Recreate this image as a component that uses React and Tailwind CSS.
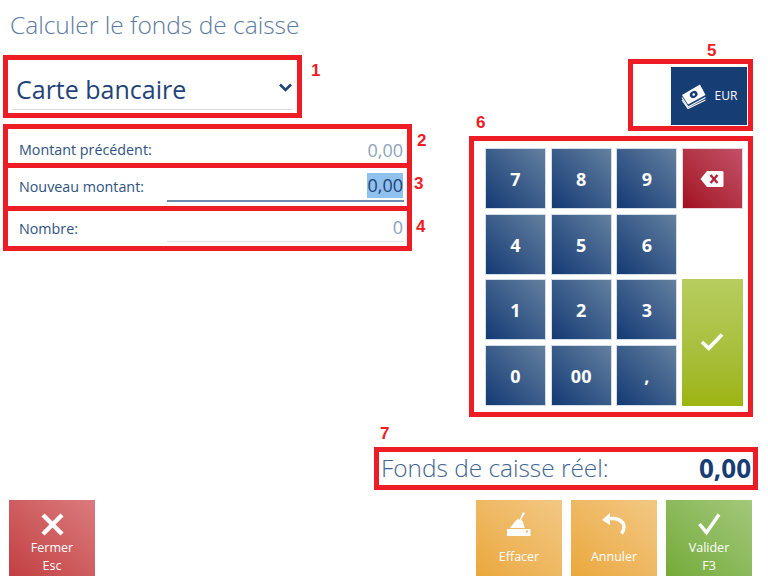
import React from 'react';

const FONT = { fontFamily: '"Open Sans", "Noto Sans", sans-serif' };

const keyClass =
  'flex items-center justify-center h-[61px] pt-[2px] bg-linear-to-tr from-[#133a74] to-[#64809f] text-white font-bold text-[18px] border border-[#d5dde8]';

const Tag = ({ children, className }) => (
  <span
    className={`absolute text-[17px] font-bold leading-none text-[#ee1c25] ${className}`}
    style={{ fontFamily: '"Liberation Sans", sans-serif' }}
  >
    {children}
  </span>
);

const BackspaceIcon = () => (
  <svg width="24" height="18" viewBox="0 0 24 18">
    <path d="M7 1h15a1.500 1.500 0 0 1 1.500 1.500v13A1.500 1.500 0 0 1 22 17H7L0.500 9z" fill="#fff" />
    <path d="M10.500 5l7 8M17.500 5l-7 8" stroke="#b3223c" strokeWidth="2.400" fill="none" />
  </svg>
);

const MoneyIcon = () => (
  <svg width="25" height="25" viewBox="0 0 25 25" fill="none">
    <path d="M1 13.500l6 9.500L24.500 13.500" stroke="#fff" strokeWidth="1.200" />
    <path d="M1 16l6 8.500L24.500 16" stroke="#fff" strokeWidth="1.200" />
    <path d="M1 11l6 9.500L24.500 11 19 .5z" fill="#fff" />
    <ellipse cx="12.700" cy="10.500" rx="4" ry="3.300" fill="#173d75" transform="rotate(-28 12.700 10.500)" />
    <circle cx="12.700" cy="10.500" r="1.300" fill="#fff" />
  </svg>
);

const BroomIcon = () => (
  <svg width="24" height="24" viewBox="0 0 24 24" fill="#fff">
    <path d="M16 0l2 1.200-4 6.300 2 2 1.700 6.500H3l5-6.500 3-2.500 1.500 .8z" />
    <path fillRule="evenodd" d="M0 17h23.500v7H0zM19 18.500v2h2v-2z" />
  </svg>
);

const UndoIcon = () => (
  <svg width="24" height="24" viewBox="0 0 24 24" fill="none">
    <path d="M0 8L8 1v12z" fill="#fff" />
    <path d="M7 6.500h4C18 6.500 22 10.500 22 15c0 2.500-1 4.500-2.500 6.500" stroke="#fff" strokeWidth="3.500" />
  </svg>
);

const KeyCheckIcon = () => (
  <svg width="24" height="18" viewBox="0 0 22 17" fill="none" stroke="#fff" strokeWidth="3.500">
    <path d="M1.500 8.500l6.500 6L20.500 1.500" />
  </svg>
);

const TallCheckIcon = () => (
  <svg width="23" height="23" viewBox="0 0 23 23" fill="none" stroke="#fff" strokeWidth="3.500">
    <path d="M1.500 11l7 8.500L21 1.500" />
  </svg>
);

const CloseIcon = () => (
  <svg width="23" height="23" viewBox="0 0 23 23" fill="none" stroke="#fff" strokeWidth="4.500">
    <path d="M2 2l19 19M21 2L2 21" />
  </svg>
);

const ActionButton = ({ icon, lines, tone, className }) => (
  <div
    className={`flex flex-col items-center w-[86px] h-[76px] bg-linear-to-tr text-white text-[12.500px] leading-[18px] ${tone} ${className || ''}`}
  >
    <div className="flex items-center justify-center h-[44px] mt-[2px] shrink-0">{icon}</div>
    <div className={lines.length === 1 ? 'mt-[2px]' : 'mt-[-7px]'}>
      {lines.map((line) => (
        <div key={line} className="text-center">
          {line}
        </div>
      ))}
    </div>
  </div>
);

export default function App() {
  return (
    <div className="relative flex flex-col w-[768px] h-[585px] overflow-hidden bg-white" style={FONT}>
      <h1 className="h-[55px] pl-[10px] pt-[6px] text-[24.500px] leading-[38px] font-light text-[#5b7aa0]">
        Calculer le fonds de caisse
      </h1>

      <div className="flex items-start h-[392px] pl-[3px]">
        <div className="flex flex-col w-[409px]">
          <div className="relative flex items-end w-[299px] h-[63px] border-[5px] border-[#ee1c25] px-[4px] pb-[3px]">
            <div className="flex items-center justify-between w-full h-[38px] border-b border-[#dcdcdc] pl-[4px]">
              <span className="text-[25px] leading-[34px] mt-[-4px] text-[#1f4478]">Carte bancaire</span>
              <svg className="mr-[1px] mt-[-6px]" width="13" height="9" viewBox="0 0 13 9" fill="none" stroke="#1f4478" strokeWidth="2.600">
                <path d="M1 1.500l5.500 5.500L12 1.500" />
              </svg>
            </div>
            <Tag className="left-[303px] top-[2px]">1</Tag>
          </div>

          <div className="relative flex flex-col mt-[6px] h-[127px] border-[5px] border-[#ee1c25]">
            <div className="flex items-center justify-between h-[34px] pl-[11px] pr-[4px] pt-[8px]">
              <span className="text-[14.300px] text-[#2f5281]">Montant précédent:</span>
              <span className="text-[18px] text-[#8fa3bd]">0,00</span>
            </div>
            <div className="h-[5px] shrink-0 bg-[#ee1c25]" />
            <div className="flex items-center justify-between h-[38px] pl-[11px] pr-[3px]">
              <span className="text-[14.300px] text-[#2f5281]">Nouveau montant:</span>
              <div className="flex justify-end w-[237px] h-[29px] border-b-2 border-[#6f8ab0] pr-[1px]">
                <span className="h-[25px] text-[18px] leading-[25px] text-[#1f4478] bg-[#8fc0ee]">0,00</span>
              </div>
            </div>
            <div className="h-[5px] shrink-0 bg-[#ee1c25]" />
            <div className="flex items-center justify-between h-[35px] pl-[11px] pr-[3px]">
              <span className="text-[14.300px] text-[#2f5281]">Nombre:</span>
              <div className="flex justify-end w-[237px] h-[27px] border-b border-[#e2e2e2] pr-[1px]">
                <span className="text-[18px] leading-[25px] text-[#8fa3bd]">0</span>
              </div>
            </div>
            <Tag className="left-[409px] top-[3px]">2</Tag>
            <Tag className="left-[406px] top-[46px]">3</Tag>
            <Tag className="left-[408px] top-[89px]">4</Tag>
          </div>
        </div>

        <div className="flex flex-col items-end ml-[57px] w-[284px] mt-[4px]">
          <div className="relative flex justify-end w-[125px] h-[72px] border-[5px] border-[#ee1c25] py-[3px] pr-[1px]">
            <div className="flex items-center justify-center gap-[9px] w-[76px] h-[58px] bg-[#173d75] text-white text-[12px]">
              <MoneyIcon />
              <span>EUR</span>
            </div>
            <Tag className="left-[74px] top-[-22px]">5</Tag>
          </div>

          <div className="relative mt-[5px] w-[284px] h-[281px] border-[5px] border-[#ee1c25] pl-[11px] pt-[7px]">
            <div className="grid grid-cols-[61px_61px_61px_61px] gap-x-[4.670px] gap-y-[4.500px]">
              {['7', '8', '9'].map((k) => (
                <div key={k} className={keyClass}>{k}</div>
              ))}
              <div className="flex items-center justify-center h-[61px] bg-linear-to-tr from-[#a30a20] to-[#c24f68] border border-[#ecd5da]">
                <BackspaceIcon />
              </div>
              {['4', '5', '6'].map((k) => (
                <div key={k} className={keyClass}>{k}</div>
              ))}
              <div />
              {['1', '2', '3'].map((k) => (
                <div key={k} className={keyClass}>{k}</div>
              ))}
              <div className="row-span-2 flex items-center justify-center bg-linear-to-b from-[#b7cd5f] to-[#9db40f]">
                <KeyCheckIcon />
              </div>
              {['0', '00', ','].map((k) => (
                <div key={k} className={keyClass}>{k}</div>
              ))}
            </div>
            <Tag className="left-[2px] top-[-27px]">6</Tag>
          </div>
        </div>
      </div>

      <div className="relative flex items-center justify-between ml-[374px] w-[384px] h-[43px] border-[5px] border-[#ee1c25] pl-[2px] pr-[2px]">
        <span className="text-[24.400px] font-light text-[#3f6593]">Fonds de caisse réel:</span>
        <span className="text-[26px] font-bold text-[#173d75]">0,00</span>
        <Tag className="left-[1px] top-[-27px]">7</Tag>
      </div>

      <div className="flex items-start justify-between mt-[10px] pl-[9px] pr-[16px]">
        <ActionButton
          icon={<CloseIcon />}
          lines={['Fermer', 'Esc']}
          tone="from-[#c23e42] to-[#da7a7d]"
        />
        <div className="flex gap-[9px]">
          <ActionButton icon={<BroomIcon />} lines={['Effacer']} tone="from-[#eba83a] to-[#f2c883]" />
          <ActionButton icon={<UndoIcon />} lines={['Annuler']} tone="from-[#eba83a] to-[#f2c883]" />
          <ActionButton
            icon={<TallCheckIcon />}
            lines={['Valider', 'F3']}
            tone="from-[#75ab38] to-[#a2c87a]"
          />
        </div>
      </div>
    </div>
  );
}
